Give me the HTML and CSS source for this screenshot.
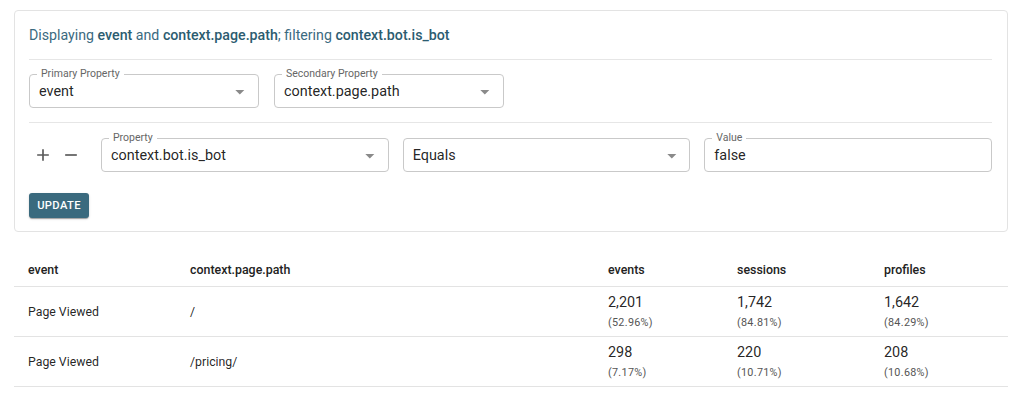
FILE: index.html
```html
<!DOCTYPE html>
<html>
<head>
<meta charset="utf-8">
<link rel="stylesheet" href="styles.css">
</head>
<body>
<div class="page">
  <section class="card">
    <div class="summary">Displaying <b>event</b> and <b>context.page.path</b>; filtering <b>context.bot.is_bot</b></div>
    <hr class="divider">
    <div class="props">
      <div class="field select w230">
        <span class="label">Primary Property</span>
        <span class="value">event</span>
        <svg class="arrow" viewBox="0 0 24 24"><path d="M7 10l5 5 5-5z"/></svg>
      </div>
      <div class="field select w230">
        <span class="label">Secondary Property</span>
        <span class="value">context.page.path</span>
        <svg class="arrow" viewBox="0 0 24 24"><path d="M7 10l5 5 5-5z"/></svg>
      </div>
    </div>
    <hr class="divider">
    <div class="filter">
      <div class="icons">
        <span class="icon-btn"><svg viewBox="0 0 24 24"><path d="M19 13h-6v6h-2v-6H5v-2h6V5h2v6h6v2z"/></svg></span>
        <span class="icon-btn"><svg viewBox="0 0 24 24"><path d="M19 13H5v-2h14v2z"/></svg></span>
      </div>
      <div class="field select grow">
        <span class="label">Property</span>
        <span class="value">context.bot.is_bot</span>
        <svg class="arrow" viewBox="0 0 24 24"><path d="M7 10l5 5 5-5z"/></svg>
      </div>
      <div class="field select grow">
        <span class="value">Equals</span>
        <svg class="arrow" viewBox="0 0 24 24"><path d="M7 10l5 5 5-5z"/></svg>
      </div>
      <div class="field grow">
        <span class="label">Value</span>
        <span class="value">false</span>
      </div>
    </div>
    <button class="update">UPDATE</button>
  </section>

  <div class="table">
    <div class="row head">
      <div class="cell">event</div>
      <div class="cell">context.page.path</div>
      <div class="cell">events</div>
      <div class="cell">sessions</div>
      <div class="cell">profiles</div>
    </div>
    <div class="row">
      <div class="cell">Page Viewed</div>
      <div class="cell">/</div>
      <div class="cell metric"><span class="num">2,201</span><span class="pct">(52.96%)</span></div>
      <div class="cell metric"><span class="num">1,742</span><span class="pct">(84.81%)</span></div>
      <div class="cell metric"><span class="num">1,642</span><span class="pct">(84.29%)</span></div>
    </div>
    <div class="row">
      <div class="cell">Page Viewed</div>
      <div class="cell">/pricing/</div>
      <div class="cell metric"><span class="num">298</span><span class="pct">(7.17%)</span></div>
      <div class="cell metric"><span class="num">220</span><span class="pct">(10.71%)</span></div>
      <div class="cell metric"><span class="num">208</span><span class="pct">(10.68%)</span></div>
    </div>
  </div>
</div>
</body>
</html>
```

FILE: styles.css
```css
* { box-sizing: border-box; }
html, body { margin: 0; padding: 0; background: #fff; }
body {
  font-family: Roboto, "Liberation Sans", Arial, sans-serif;
  color: rgba(0,0,0,0.87);
}
.page {
  padding: 10px 16px 0 14px;
}
.card {
  border: 1px solid #e3e3e3;
  border-radius: 4px;
  padding: 14px 15px 13px 14px;
  display: flex;
  flex-direction: column;
}
.summary {
  font-size: 14.2px;
  line-height: 20px;
  height: 20px;
  color: #3b6a7f;
}
.summary b { font-weight: 500; color: #2c5c70; }
.divider {
  border: 0;
  border-top: 1px solid #e6e6e6;
  margin: 14px 0;
  height: 0;
}
.props {
  display: flex;
  gap: 15px;
}
.field {
  position: relative;
  height: 34px;
  border: 1px solid #c9c9c9;
  border-radius: 4px;
  display: flex;
  align-items: center;
  padding: 2px 10px 0 9px;
}
.w230 { width: 230px; }
.grow { flex: 1; }
.label {
  position: absolute;
  top: -7px;
  left: 7px;
  padding: 0 4px;
  background: #fff;
  font-size: 10.5px;
  line-height: 12px;
  color: #666;
}
.value {
  font-size: 14.4px;
  color: rgba(0,0,0,0.87);
  line-height: 18px;
}
.arrow {
  position: absolute;
  right: 7px;
  top: 6px;
  width: 21.6px;
  height: 21.6px;
  fill: #8a8a8a;
}
.filter {
  display: flex;
  align-items: center;
  gap: 14px;
  margin-top: 1px;
}
.icons {
  display: flex;
  width: 58px;
}
.icon-btn {
  width: 28px;
  height: 28px;
  display: flex;
  align-items: center;
  justify-content: center;
}
.icon-btn svg {
  width: 20px;
  height: 20px;
  fill: #5a5a5a;
}
.update {
  align-self: flex-start;
  margin-top: 21px;
  height: 25px;
  width: 60px;
  border: 0;
  border-radius: 3px;
  background: #3a6a7e;
  color: #fff;
  font-family: Roboto, "Liberation Sans", Arial, sans-serif;
  font-weight: 500;
  font-size: 11.2px;
  letter-spacing: 0.35px;
  padding: 0;
  box-shadow: 0 2px 1px -1px rgba(0,0,0,0.2), 0 1px 1px 0 rgba(0,0,0,0.14), 0 1px 3px 0 rgba(0,0,0,0.12);
}
.table {
  margin-top: 22px;
}
.row {
  display: grid;
  grid-template-columns: 162px 418px 129px 147px 1fr;
  height: 50px;
  border-bottom: 1px solid #e3e3e3;
  align-items: center;
}
.row.head {
  height: 33px;
  font-weight: 500;
  font-size: 12.4px;
  color: #222;
  padding-bottom: 1px;
}
.cell {
  padding-left: 14px;
  font-size: 12.3px;
}
.head .cell { font-size: 12.4px; font-weight: 500; }
.metric {
  display: flex;
  flex-direction: column;
  padding-top: 1px;
}
.num {
  font-size: 14.4px;
  line-height: 18px;
}
.pct {
  margin-top: 3px;
  font-size: 10.8px;
  line-height: 16px;
  letter-spacing: 0.3px;
  color: #555;
}
```
